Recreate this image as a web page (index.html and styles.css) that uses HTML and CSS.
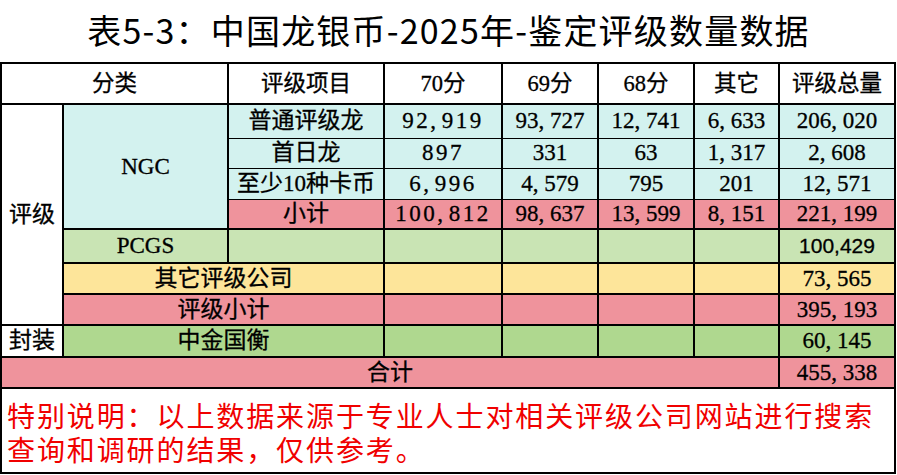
FILE: index.html
```html
<!DOCTYPE html>
<html lang="zh-CN">
<head>
<meta charset="utf-8">
<title>表5-3</title>
<link rel="stylesheet" href="styles.css">
</head>
<body>
<h1 class="title">表5-3：中国龙银币-2025年-鉴定评级数量数据</h1>
<table class="grid">
  <colgroup>
    <col class="c1"><col class="c2"><col class="c3"><col class="c4"><col class="c5"><col class="c6"><col class="c7"><col class="c8">
  </colgroup>
  <tr class="head">
    <th colspan="2">分类</th><th>评级项目</th><th>70分</th><th>69分</th><th>68分</th><th>其它</th><th>评级总量</th>
  </tr>
  <tr class="cyan h34 tb">
    <td rowspan="7" class="white">评级</td>
    <td rowspan="4" class="cyan">NGC</td>
    <td>普通评级龙</td><td class="n70">92<span class="cm">,</span>919</td><td>93<span class="cm">,</span>727</td><td>12<span class="cm">,</span>741</td><td>6<span class="cm">,</span>633</td><td>206<span class="cm">,</span>020</td>
  </tr>
  <tr class="cyan h30 tb tt">
    <td>首日龙</td><td class="n70">897</td><td>331</td><td>63</td><td>1<span class="cm">,</span>317</td><td>2<span class="cm">,</span>608</td>
  </tr>
  <tr class="cyan h31 tb tt">
    <td>至少10种卡币</td><td class="n70">6<span class="cm">,</span>996</td><td>4<span class="cm">,</span>579</td><td>795</td><td>201</td><td>12<span class="cm">,</span>571</td>
  </tr>
  <tr class="pink h30 tt">
    <td>小计</td><td class="n70">100<span class="cm">,</span>812</td><td>98<span class="cm">,</span>637</td><td>13<span class="cm">,</span>599</td><td>8<span class="cm">,</span>151</td><td>221<span class="cm">,</span>199</td>
  </tr>
  <tr class="lgreen h34">
    <td>PCGS</td><td></td><td></td><td></td><td></td><td></td><td class="sans">100,429</td>
  </tr>
  <tr class="yellow h31">
    <td colspan="2">其它评级公司</td><td></td><td></td><td></td><td></td><td>73<span class="cm">,</span>565</td>
  </tr>
  <tr class="pink h31">
    <td colspan="2">评级小计</td><td></td><td></td><td></td><td></td><td>395<span class="cm">,</span>193</td>
  </tr>
  <tr class="green h32">
    <td class="white">封装</td><td colspan="2">中金国衡</td><td></td><td></td><td></td><td></td><td>60<span class="cm">,</span>145</td>
  </tr>
  <tr class="pink h31">
    <td colspan="7">合计</td><td>455<span class="cm">,</span>338</td>
  </tr>
  <tr class="note-row">
    <td colspan="8" class="note">特别说明：以上数据来源于专业人士对相关评级公司网站进行搜索查询和调研的结果，仅供参考。</td>
  </tr>
</table>
</body>
</html>
```
FILE: styles.css
```css
html, body {
  margin: 0;
  padding: 0;
  background: #ffffff;
}

.title {
  margin: 0;
  height: 62px;
  line-height: 60px;
  text-align: center;
  font-family: "Noto Sans CJK SC", sans-serif;
  font-weight: 400;
  font-size: 34px;
  letter-spacing: 1.2px;
  color: #000;
}

.grid {
  border-collapse: collapse;
  table-layout: fixed;
  width: 894px;
  font-family: "Liberation Serif", "Noto Sans CJK SC", serif;
  font-size: 23px;
  color: #000;
}

.c1 { width: 62px; }
.c2 { width: 165px; }
.c3 { width: 156px; }
.c4 { width: 118px; }
.c5 { width: 96px; }
.c6 { width: 96px; }
.c7 { width: 85px; }
.c8 { width: 116px; }

.grid th,
.grid td {
  border: 2px solid #000;
  padding: 0;
  text-align: center;
  vertical-align: middle;
  white-space: nowrap;
  line-height: 24px;
  font-weight: 400;
  -webkit-text-stroke: 0.3px #000;
}

.head { height: 41px; background: #fff; }
.head th { font-size: 22.5px; }

.h30 { height: 30px; }
.h31 { height: 31px; }
.h32 { height: 32px; }
.h34 { height: 34px; }

.tb td { border-bottom-width: 1px; }
.tt td { border-top-width: 1px; }

.cyan { background: #d3f2ef; }
.pink { background: #ef939c; }
.lgreen { background: #c9e4b4; }
.yellow { background: #fde59a; }
.green { background: #afd88f; }
.white { background: #ffffff; }
.grid td.cyan { background: #d3f2ef; border-bottom-width: 2px; }
.grid td.white { border-bottom-width: 2px; }

.cm {
  display: inline-block;
  width: 0.5em;
  text-align: left;
}

.n70 { letter-spacing: 2.5px; }

.sans {
  font-family: "Liberation Sans", sans-serif;
  font-size: 21px;
}

.note-row { height: 85px; }

.grid td.note {
  text-align: left;
  vertical-align: top;
  white-space: normal;
  padding: 9px 10px 0 5px;
  font-family: "Noto Sans CJK SC", sans-serif;
  font-size: 28px;
  line-height: 34px;
  letter-spacing: 1.9px;
  color: #f00000;
  -webkit-text-stroke: 0;
}
```
